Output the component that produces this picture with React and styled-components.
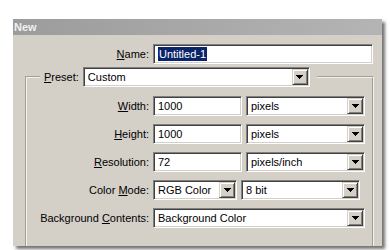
import React from "react";
import styled, { createGlobalStyle } from "styled-components";

const GlobalStyle = createGlobalStyle`
	html, body {
		margin: 0;
		padding: 0;
		background: #ffffff;
	}
	body {
		font-family: "Liberation Sans", Arial, sans-serif;
		font-size: 11px;
		color: #000000;
	}
`;

// ===================== Styled Components
const Page = styled.div`
	width: 390px;
	height: 250px;
	overflow: hidden;
	padding: 19px 0 0 13px;
	box-sizing: border-box;
`;

const Dialog = styled.div`
	width: 369px;
	height: 227px;
	background: #d4d0c8;
	box-shadow: 3px 3px 3px rgba(0, 0, 0, 0.55);
	overflow: hidden;
	display: flex;
	flex-direction: column;
`;

const TitleBar = styled.div`
	height: 16px;
	flex-shrink: 0;
	background: linear-gradient(to right, #9c9c9c, #b4b4b4);
	color: #f0f0f0;
	font-weight: bold;
	font-size: 11px;
	line-height: 17px;
	padding-left: 1px;
`;

const Row = styled.div`
	display: flex;
	align-items: center;
	gap: ${(p) => p.gap || 4}px;
	margin-top: ${(p) => p.mt || 0}px;
`;

const Label = styled.label`
	width: ${(p) => p.width}px;
	text-align: right;
	white-space: nowrap;
	flex-shrink: 0;
	line-height: 20px;

	u {
		text-decoration: underline;
		text-underline-offset: 1px;
	}
`;

const Field = styled.div`
	width: ${(p) => p.width}px;
	height: 20px;
	box-sizing: border-box;
	background: #ffffff;
	border-style: solid;
	border-width: 1px;
	border-color: #808080 #ffffff #ffffff #808080;
	box-shadow: inset 1px 1px 0 #404040, inset -1px -1px 0 #d4d0c8;
	display: flex;
	align-items: center;
	padding: 0 1px 0 4px;
	white-space: nowrap;
	overflow: hidden;
	flex-shrink: 0;
`;

const FieldText = styled.span`
	flex: 1;
	line-height: 14px;
`;

const Selected = styled.span`
	background: #0a246a;
	color: #ffffff;
	padding: 0 1px;
	line-height: 14px;
`;

const DropButton = styled.div`
	width: 16px;
	height: 16px;
	box-sizing: border-box;
	background: #d4d0c8;
	border-style: solid;
	border-width: 1px;
	border-color: #d4d0c8 #404040 #404040 #d4d0c8;
	box-shadow: inset 1px 1px 0 #ffffff, inset -1px -1px 0 #808080;
	display: flex;
	align-items: center;
	justify-content: center;
	flex-shrink: 0;
`;

const GroupBox = styled.fieldset`
	margin: 3px 8px 0 12px;
	padding: 9px 0 20px 0;
	border: 2px groove #f4f2ee;
	min-width: 0;
	display: flex;
	flex-direction: column;
	gap: 8px;
`;

const Legend = styled.legend`
	margin-left: 13px;
	padding: 0 7px 0 4px;
	display: flex;
	align-items: center;
	gap: 4px;
`;

const Arrow = () => (
	<svg width="7" height="4" viewBox="0 0 7 4" shapeRendering="crispEdges">
		<rect x="0" y="0" width="7" height="1" fill="#000" />
		<rect x="1" y="1" width="5" height="1" fill="#000" />
		<rect x="2" y="2" width="3" height="1" fill="#000" />
		<rect x="3" y="3" width="1" height="1" fill="#000" />
	</svg>
);

const Select = ({ width, value }) => (
	<Field width={width}>
		<FieldText>{value}</FieldText>
		<DropButton>
			<Arrow />
		</DropButton>
	</Field>
);

const rows = [
	{ key: "W", rest: "idth:", value: "1000", unit: "pixels" },
	{ key: "H", rest: "eight:", value: "1000", unit: "pixels" },
	{ key: "R", rest: "esolution:", value: "72", unit: "pixels/inch" },
];

const App = () => {
	return (
		<Page>
			<GlobalStyle />
			<Dialog>
				<TitleBar>New</TitleBar>

				<Row mt={9}>
					<Label width={136}>
						<u>N</u>ame:
					</Label>
					<Field width={220}>
						<Selected>Untitled-1</Selected>
					</Field>
				</Row>

				<GroupBox>
					<Legend>
						<Label>
							<u>P</u>reset:
						</Label>
						<Select width={227} value="Custom" />
					</Legend>

					{rows.map((row) => (
						<Row key={row.key}>
							<Label width={122}>
								<u>{row.key}</u>
								{row.rest}
							</Label>
							<Field width={89}>
								<FieldText>{row.value}</FieldText>
							</Field>
							<Select width={119} value={row.unit} />
						</Row>
					))}

					<Row>
						<Label width={122}>
							Color <u>M</u>ode:
						</Label>
						<Select width={84} value="RGB Color" />
						<Select width={119} value="8 bit" />
					</Row>

					<Row>
						<Label width={122}>
							Background <u>C</u>ontents:
						</Label>
						<Select width={212} value="Background Color" />
					</Row>
				</GroupBox>
			</Dialog>
		</Page>
	);
};

export default App;
